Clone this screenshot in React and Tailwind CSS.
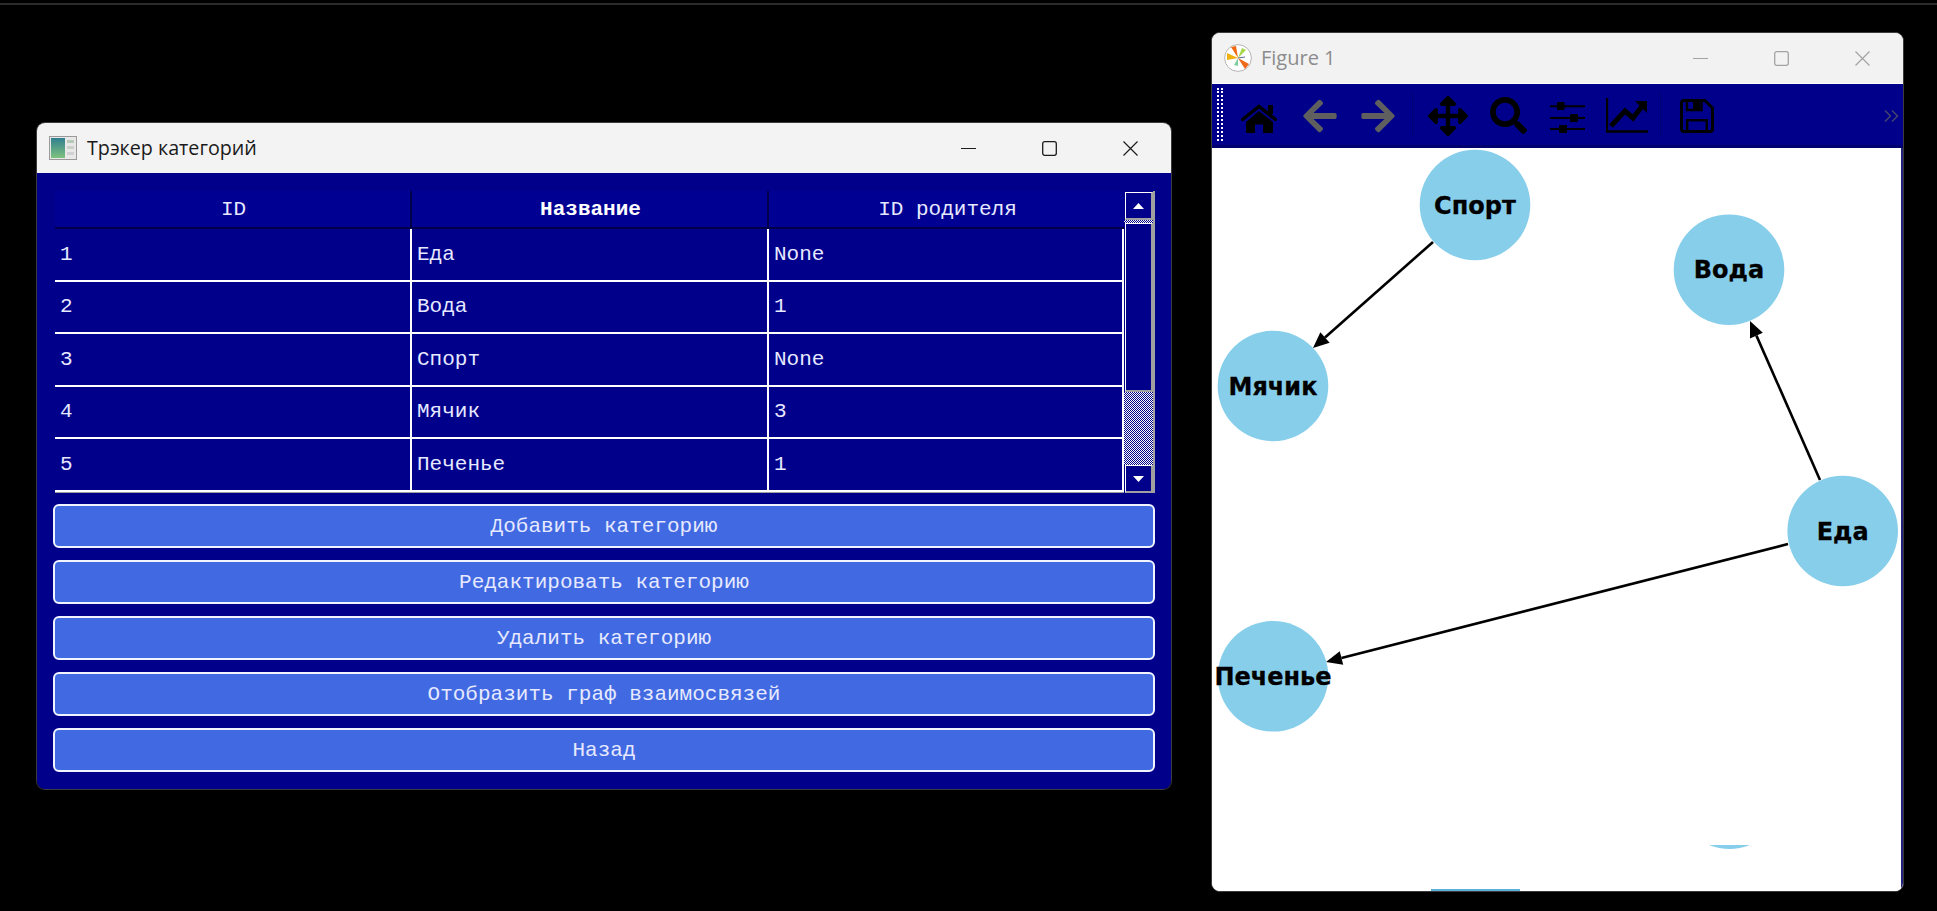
import React from 'react';
import { FaArrowLeft, FaArrowRight, FaArrowsAlt, FaSearch } from 'react-icons/fa';

const rows = [
  ['1', 'Еда', 'None'],
  ['2', 'Вода', '1'],
  ['3', 'Спорт', 'None'],
  ['4', 'Мячик', '3'],
  ['5', 'Печенье', '1'],
];

const buttons = ['Добавить категорию', 'Редактировать категорию', 'Удалить категорию', 'Отобразить граф взаимосвязей', 'Назад'];

// canvas origin is 1212,148 in the page
const nodes = [
  { label: 'Спорт', x: 263, y: 57 },
  { label: 'Вода', x: 517, y: 121.7 },
  { label: 'Мячик', x: 61, y: 238 },
  { label: 'Еда', x: 630.7, y: 383 },
  { label: 'Печенье', x: 61, y: 528.3 },
];

const edges = [
  [221, 94, 101, 200],
  [608, 332, 538, 173],
  [576, 396, 114, 514],
];

function Arrow({ x1, y1, x2, y2 }) {
  const len = Math.hypot(x2 - x1, y2 - y1);
  const ux = (x2 - x1) / len;
  const uy = (y2 - y1) / len;
  const bx = x2 - ux * 16;
  const by = y2 - uy * 16;
  const points = `${x2},${y2} ${bx - uy * 7},${by + ux * 7} ${bx + uy * 7},${by - ux * 7}`;
  return (
    <g>
      <line x1={x1} y1={y1} x2={bx} y2={by} stroke="black" strokeWidth="2.6" />
      <polygon points={points} fill="black" />
    </g>
  );
}

function WindowControls({ light }) {
  const color = light ? 'text-[#a3a3a3]' : 'text-[#1c1c1c]';
  return (
    <div className={`flex items-center ml-auto ${color}`}>
      <svg width="15" height="15" viewBox="0 0 15 15" className="mr-[66px]">
        <line x1="0" y1="7.5" x2="15" y2="7.5" stroke="currentColor" strokeWidth="1.2" />
      </svg>
      <svg width="15" height="15" viewBox="0 0 15 15" className="mr-[66px]">
        <rect x="0.7" y="0.7" width="13.6" height="13.6" rx="2" fill="none" stroke="currentColor" strokeWidth="1.3" />
      </svg>
      <svg width="15" height="15" viewBox="0 0 15 15" className="mr-[33px]">
        <path d="M0.5 0.5 L14.5 14.5 M14.5 0.5 L0.5 14.5" stroke="currentColor" strokeWidth="1.2" />
      </svg>
    </div>
  );
}

function AppIcon() {
  return (
    <svg width="28" height="24" viewBox="0 0 28 24" className="shrink-0">
      <defs>
        <linearGradient id="appGreen" x1="0" y1="0" x2="0" y2="1">
          <stop offset="0" stopColor="#2f7f8f" />
          <stop offset="1" stopColor="#7fc27f" />
        </linearGradient>
      </defs>
      <rect x="0.5" y="0.5" width="27" height="23" fill="#e8e8e8" stroke="#9a9a9a" />
      <rect x="2" y="2" width="14" height="20" fill="url(#appGreen)" />
      <rect x="18" y="4" width="7" height="3" fill="#b8c8b8" />
      <rect x="18" y="10" width="7" height="3" fill="#c8d0c8" />
      <rect x="18" y="16" width="7" height="3" fill="#d0d0d0" />
    </svg>
  );
}

function FigureIcon() {
  return (
    <svg width="28" height="28" viewBox="0 0 28 28" className="shrink-0">
      <circle cx="14" cy="14" r="13.4" fill="white" stroke="#b5b5b5" />
      <polygon points="14,14 7,3 12,2" fill="#f26a12" />
      <polygon points="14,14 3,9 3,16" fill="#f0b010" />
      <polygon points="14,14 18,4 22,6" fill="#a6d84a" />
      <polygon points="14,14 21,25 25,20" fill="#ee6a18" />
      <polygon points="14,14 10,21 14,22" fill="#7fd0a0" />
      <line x1="14" y1="14" x2="21" y2="13" stroke="#5a6a9a" strokeWidth="1" />
    </svg>
  );
}

function HomeIcon({ className }) {
  return (
    <svg width="36" height="29" viewBox="0 0 36 29" className={className}>
      <polyline points="1.5,15.5 18,2.5 34.5,15.5" fill="none" stroke="black" strokeWidth="3.4" strokeLinecap="round" />
      <rect x="27" y="1" width="5" height="9" fill="black" />
      <polygon points="18,7 32,18 32,29 22,29 22,20.5 14,20.5 14,29 5,29 5,18" fill="black" />
    </svg>
  );
}

function SlidersIcon({ className }) {
  return (
    <svg width="35" height="31" viewBox="0 0 35 31" className={className}>
      <path d="M0 4.3 H35 M0 16 H35 M0 27 H35" stroke="black" strokeWidth="2" />
      <rect x="7" y="0" width="7.5" height="8" rx="1" fill="black" />
      <rect x="20" y="12" width="8" height="8" rx="1" fill="black" />
      <rect x="9" y="23" width="8" height="8" rx="1" fill="black" />
    </svg>
  );
}

function ChartIcon({ className }) {
  return (
    <svg width="42" height="35" viewBox="0 0 42 35" className={className}>
      <path d="M1 0 V33.5 H42" fill="none" stroke="black" strokeWidth="2.4" />
      <polyline points="5,28 19,13 27,20 37,7" fill="none" stroke="black" strokeWidth="5" />
      <polygon points="29,3 41,3 41,15" fill="black" />
    </svg>
  );
}

function SaveIcon({ className }) {
  return (
    <svg width="34" height="34" viewBox="0 0 34 34" className={className}>
      <path d="M4 1.5 H25 L32.5 9 V30 Q32.5 32.5 30 32.5 H4 Q1.5 32.5 1.5 30 V4 Q1.5 1.5 4 1.5 Z" fill="none" stroke="black" strokeWidth="3" />
      <path d="M7 2 V11 H21.5 V2" fill="none" stroke="black" strokeWidth="2.4" />
      <rect x="13" y="2" width="7" height="8" fill="black" />
      <rect x="7.2" y="21.2" width="19.6" height="11" fill="none" stroke="black" strokeWidth="2.4" />
    </svg>
  );
}

function ScrollButton({ down }) {
  return (
    <div className="ml-px w-[28px] h-[28px] shrink-0 bg-[#00008b] border-l border-t border-white border-r-2 border-b-2 border-r-[#a0a0a0] border-b-[#a0a0a0] flex items-center justify-center">
      <svg width="11" height="6" viewBox="0 0 11 6">
        <polygon points={down ? '0,0 11,0 5.5,6' : '5.5,0 11,6 0,6'} fill="white" />
      </svg>
    </div>
  );
}

export default function App() {
  return (
    <div className="relative w-[1937px] h-[911px] bg-black overflow-hidden">
      <div className="pt-[3px]">
        <div className="h-[2px] bg-[#2b2b2b]" />
      </div>

      {/* Tracker window */}
      <div className="absolute left-[36px] top-[122px] w-[1136px] h-[668px] flex flex-col rounded-[9px] border border-[#3c3c3c] overflow-hidden">
        <div className="h-[50px] shrink-0 bg-[#f3f3f3] flex items-center pl-[12px]">
          <AppIcon />
          <span className="ml-[10px] text-[19.7px] text-[#1a1a1a] font-['Open_Sans',sans-serif]">Трэкер категорий</span>
          <WindowControls />
        </div>

        <div className="flex-1 bg-[#00008b] pt-[18px] px-[16px] font-['Liberation_Mono',monospace] text-[21px] text-[#e6e9ff]">
          <div className="flex h-[302px] ml-[2px]">
            <div className="flex-1 flex flex-col border-b border-[#a0a0a0]">
              <div className="h-[38px] shrink-0 grid grid-cols-[357px_357px_1fr] bg-[#000092] border-b-2 border-[#00004a]">
                <div className="flex items-center justify-center pt-px pl-[2px] border-r-2 border-[#00004a]">ID</div>
                <div className="flex items-center justify-center pt-px pl-[2px] border-r-2 border-[#00004a] font-bold text-white">Название</div>
                <div className="flex items-center justify-center pt-px pl-[2px]">ID родителя</div>
              </div>
              {rows.map((row) => (
                <div key={row[0]} className="h-[52.5px] shrink-0 grid grid-cols-[357px_357px_1fr] border-b-2 border-r-2 border-white">
                  <div className="flex items-center pl-[5px] border-r-2 border-white">{row[0]}</div>
                  <div className="flex items-center pl-[5px] border-r-2 border-white">{row[1]}</div>
                  <div className="flex items-center pl-[5px]">{row[2]}</div>
                </div>
              ))}
            </div>

            <div className="w-[31px] shrink-0 flex flex-col pt-px border-r-2 border-[#a0a0a0]">
              <ScrollButton />
              <div className="h-[3px] shrink-0 [background:repeating-conic-gradient(#ffffff_0_25%,#00008b_0_50%)_0_0/2px_2px]" />
              <div className="ml-px w-[28px] h-[169px] shrink-0 bg-[#00008b] border-l border-t border-white border-r-2 border-b-2 border-r-[#a0a0a0] border-b-[#a0a0a0]" />
              <div className="flex-1 [background:repeating-conic-gradient(#ffffff_0_25%,#00008b_0_50%)_0_0/2px_2px]" />
              <ScrollButton down />
            </div>
          </div>

          <div className="flex flex-col gap-[12px] mt-[11px]">
            {buttons.map((label) => (
              <button key={label} className="h-[44px] pt-px bg-[#4169e1] border-2 border-[#f0f4ff] rounded-[6px] text-[#e6e9ff]">
                {label}
              </button>
            ))}
          </div>
        </div>
      </div>

      {/* Figure window */}
      <div className="absolute left-[1211px] top-[32px] w-[693px] h-[860px] flex flex-col rounded-[9px] border border-[#3c3c3c] overflow-hidden bg-white">
        <div className="h-[50px] shrink-0 bg-[#f2f2f2] flex items-center pl-[12px]">
          <FigureIcon />
          <span className="ml-[9px] text-[20px] text-[#8c8c8c] font-['Open_Sans',sans-serif]">Figure 1</span>
          <WindowControls light />
        </div>

        <div className="h-[64px] mt-px shrink-0 bg-[#00008b] border-b-[3px] border-[#00006e] flex items-center text-black">
          <div className="ml-[5px] w-[6px] h-[53px] border-x-2 border-dotted border-white" />
          <HomeIcon className="ml-[18px] mt-[8px] shrink-0" />
          <FaArrowLeft size={38} className="ml-[24px] mt-[3px] text-[#5f5f5f]" />
          <FaArrowRight size={38} className="ml-[20px] mt-[3px] text-[#5f5f5f]" />
          <div className="ml-[15px] w-px h-[43px] bg-[#000070]" />
          <FaArrowsAlt size={40} className="ml-[15px] mt-[3px]" />
          <FaSearch size={37} className="ml-[22px] mt-[2px]" />
          <SlidersIcon className="ml-[23px] mt-[6px] shrink-0" />
          <ChartIcon className="ml-[21px] mt-[2px] shrink-0" />
          <div className="ml-[12px] w-px h-[43px] bg-[#000070]" />
          <SaveIcon className="ml-[19px] mt-[3px] shrink-0" />
          <svg width="15" height="12" viewBox="0 0 15 12" className="ml-auto mr-[4px] mt-[3px]">
            <path d="M1 0.5 L6.5 6 L1 11.5 M8 0.5 L13.5 6 L8 11.5" fill="none" stroke="#45456e" strokeWidth="1.5" />
          </svg>
        </div>

        <div className="flex-1 border-r-2 border-[#22227a] bg-white">
          <svg width="689" height="743" viewBox="0 0 689 743" className="block">
            {edges.map((e) => (
              <Arrow key={e[0]} x1={e[0]} y1={e[1]} x2={e[2]} y2={e[3]} />
            ))}
            {nodes.map((n) => (
              <g key={n.label}>
                <circle cx={n.x} cy={n.y} r="55.3" fill="#87ceeb" />
                <text x={n.x} y={n.y + 8.5} textAnchor="middle" stroke="black" strokeWidth="0.3" className="font-['DejaVu_Sans',sans-serif] font-bold text-[24px]" fill="black">{n.label}</text>
              </g>
            ))}
            <path d="M497 697 Q517.5 705 538 697 Z" fill="#87ceeb" />
            <rect x="219" y="741" width="89" height="2" fill="#5bb0dc" />
          </svg>
        </div>
      </div>
    </div>
  );
}
